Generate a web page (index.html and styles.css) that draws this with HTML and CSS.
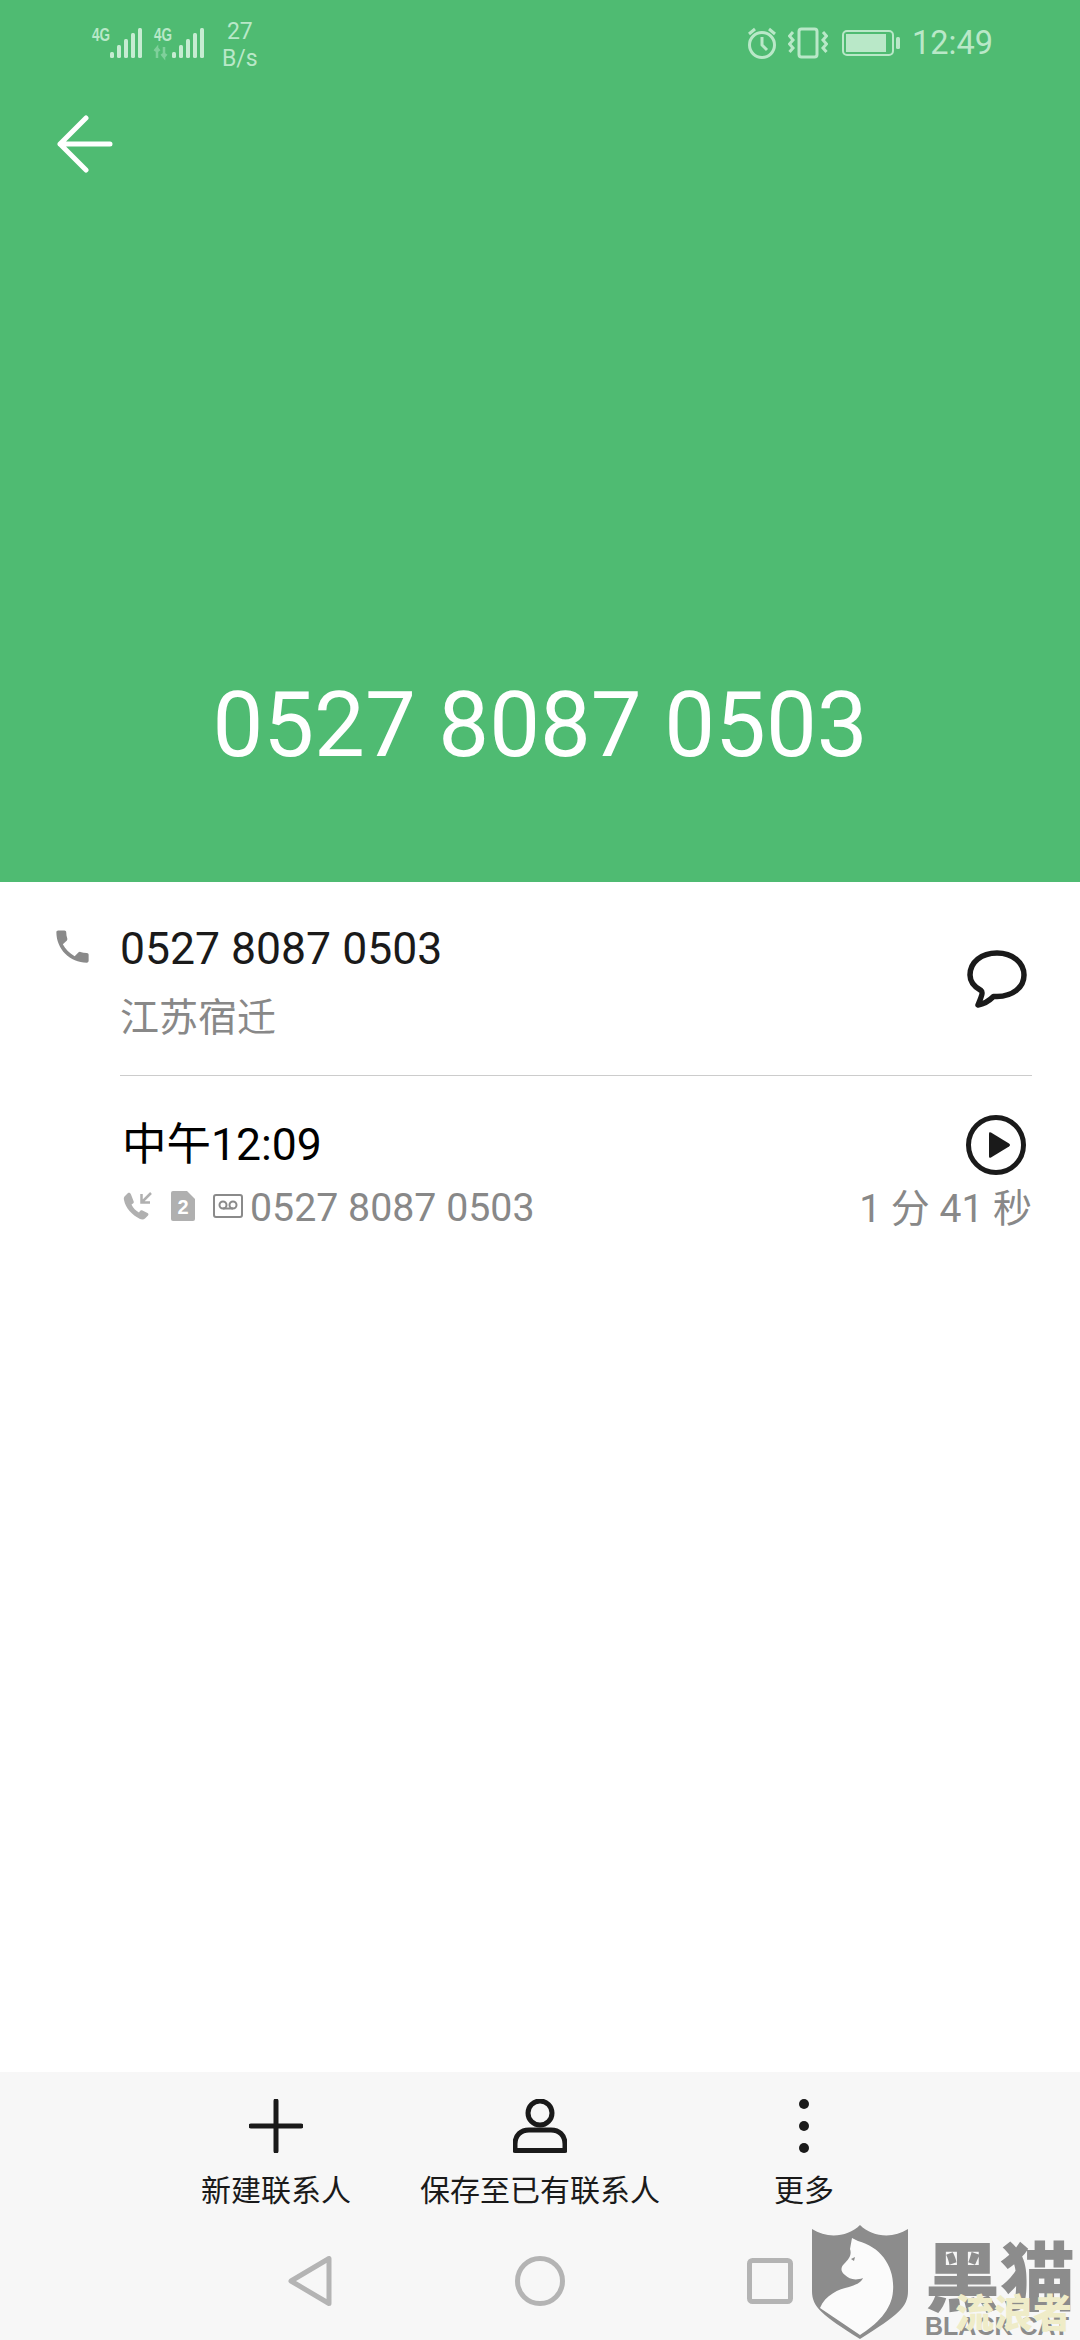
FILE: index.html
```html
<!DOCTYPE html>
<html lang="zh">
<head>
<meta charset="utf-8">
<title>通话详情</title>
<link rel="stylesheet" href="styles.css">
</head>
<body>
<div class="page">
  <header class="hero">
    <div class="status">
      <div class="status-left">
        <svg class="sig" width="52" height="32" viewBox="0 0 52 32"><text class="g4" x="0" y="14" textLength="18" lengthAdjust="spacingAndGlyphs">4G</text><g class="bars"><rect x="18" y="25" width="4" height="6" rx="1.5"/><rect x="25" y="18" width="4" height="13" rx="1.5"/><rect x="32" y="12" width="4" height="19" rx="1.5"/><rect x="39" y="6" width="4" height="25" rx="1.5"/><rect x="46" y="1" width="4" height="30" rx="1.5"/></g></svg>
        <svg class="sig" width="52" height="32" viewBox="0 0 52 32"><text class="g4" x="0" y="14" textLength="18" lengthAdjust="spacingAndGlyphs">4G</text><path class="updown" d="M3 31V21l-2.500 3M3 21l2.500 3M10 20v10l-2.500-3M10 30l2.500-3"/><g class="bars"><rect x="18" y="25" width="4" height="6" rx="1.5"/><rect x="25" y="18" width="4" height="13" rx="1.500"/><rect x="32" y="12" width="4" height="19" rx="1.5"/><rect x="39" y="6" width="4" height="25" rx="1.5"/><rect x="46" y="1" width="4" height="30" rx="1.5"/></g></svg>
        <div class="speed"><span>27</span><span>B/s</span></div>
      </div>
      <div class="status-right">
        <svg width="30" height="32" viewBox="0 0 30 32" class="st-ico"><circle cx="15" cy="18" r="12.500"/><path d="M15 10v8l5 5M2 7l6-5M28 7l-6-5"/></svg>
        <svg width="40" height="32" viewBox="0 0 40 32" class="st-ico"><rect x="11" y="2" width="18" height="28" rx="2.500"/><path d="M5 5L1.500 9 5 13 1.500 17 5 21 1.500 25M35 5l3.500 4-3.500 4 3.500 4-3.500 4 3.500 4"/></svg>
        <svg width="59" height="26" viewBox="0 0 59 26" class="batt"><rect class="batt-o" x="1" y="1" width="50" height="24" rx="4"/><rect class="batt-f" x="4" y="4" width="40" height="18"/><rect class="batt-f" x="54" y="7" width="4" height="12" rx="1.500"/></svg>
        <span class="time">12:49</span>
      </div>
    </div>
    <div class="backrow">
      <svg width="58" height="58" viewBox="0 0 58 58" class="back"><path d="M29 3L3 29l26 26M3 29h50"/></svg>
    </div>
    <div class="bignum">0527 8087 0503</div>
  </header>

  <main class="details">
    <section class="row first">
      <svg class="phone" width="43" height="43" viewBox="0 0 24 24"><path d="M6.600 10.800c1.400 2.800 3.800 5.100 6.600 6.600l2.200-2.200c.3-.3.700-.4 1-.2 1.100.4 2.300.6 3.600.6.600 0 1 .4 1 1V20c0 .6-.4 1-1 1C10.600 21 3 13.400 3 4c0-.6.400-1 1-1h3.500c.6 0 1 .4 1 1 0 1.300.2 2.500.6 3.600.1.300 0 .7-.2 1z"/></svg>
      <div class="row-main">
        <div class="primary">0527 8087 0503</div>
        <div class="secondary loc">江苏宿迁</div>
      </div>
      <svg class="msg" width="60" height="58" viewBox="0 0 60 58"><path d="M30 3C14.500 3 3 12 3 25c0 7 4.500 12 11 15.500 2 1.500 1 5-3 14.500 6-1 11-4 15.500-8.500 1 0 2.500 0 3.500 0 15.500 0 27-9 27-21.500S45.500 3 30 3z"/></svg>
    </section>
    <div class="divider"></div>
    <section class="row second">
      <div class="row-main">
        <div class="primary call-time">中午12:09</div>
        <div class="meta">
          <svg width="30" height="30" viewBox="0 0 30 30" class="m-call"><path class="fillp" d="M2 5c-1 1-1.500 2-1 4 1.500 8 8 15 16 19 2 .8 4 .5 5-.5l3-3c.8-1 .5-2-.5-2.500l-5-2.500c-1-.5-2-.3-2.500.5l-1 1.500c-3-1.500-6-4.500-7.500-8l1.500-1c1-.7 1-1.500.5-2.500L8 3.500C7.300 1.500 6 1.500 5 2z"/><path class="strokep" d="M28 2l-9 9M18.500 3v8.500H27"/></svg>
          <svg width="24" height="30" viewBox="0 0 24 30" class="m-sim"><path class="sim" d="M2 0h14l8 8v20a2 2 0 0 1-2 2H2a2 2 0 0 1-2-2V2a2 2 0 0 1 2-2z"/><text class="sim-t" x="12" y="23" text-anchor="middle">2</text></svg>
          <svg width="30" height="24" viewBox="0 0 30 24" class="m-vm"><rect x="1" y="1" width="28" height="22" rx="2"/><circle cx="10" cy="11" r="3.500"/><circle cx="20" cy="11" r="3.500"/><path d="M10 14.500h10"/></svg>
          <span class="secondary">0527 8087 0503</span>
        </div>
      </div>
      <div class="row-side">
        <svg width="60" height="60" viewBox="0 0 60 60" class="play"><circle cx="30" cy="30" r="27.500"/><path class="tri" d="M23 18.500v23q0 2 2 1l18-11q2-1.500 0-3l-18-11q-2-1-2 1z"/></svg>
        <div class="secondary dur">1 分 41 秒</div>
      </div>
    </section>
  </main>

  <footer class="bottom">
    <div class="actions">
      <div class="action">
        <svg width="54" height="54" viewBox="0 0 54 54" class="a-ico"><path d="M27 2v50M2 27h50"/></svg>
        <span>新建联系人</span>
      </div>
      <div class="action">
        <svg width="54" height="54" viewBox="0 0 54 54" class="a-ico"><circle cx="27" cy="14" r="12"/><path d="M2 51.500V45c0-9 6-14 14-14h22c8 0 14 5 14 14v6.500z"/></svg>
        <span>保存至已有联系人</span>
      </div>
      <div class="action">
        <svg width="54" height="54" viewBox="0 0 54 54" class="a-dots"><circle cx="27" cy="5" r="5"/><circle cx="27" cy="27" r="5"/><circle cx="27" cy="49" r="5"/></svg>
        <span>更多</span>
      </div>
    </div>
    <nav class="navbar">
      <svg width="44" height="50" viewBox="0 0 44 50" class="nav-ico"><path d="M3 25L41 2.500v45z"/></svg>
      <svg width="50" height="50" viewBox="0 0 50 50" class="nav-ico"><circle cx="25" cy="25" r="22.500"/></svg>
      <svg width="46" height="46" viewBox="0 0 46 46" class="nav-ico"><rect x="2.500" y="2.500" width="41" height="41" rx="3"/></svg>
    </nav>
    <div class="wm">
      <svg width="98" height="114" viewBox="0 0 98 114" class="wm-shield"><path d="M1 4c15 10 36 8 48-4 12 12 33 14 48 4v62c0 16-10 24-48 48C11 90 1 82 1 66z"/><path class="cat" d="M41 13l6 3C70 22 84 42 82 66 81 85 65 100 49 110L9 83C14 70 28 64 38 62 44 60 50 58 52 53 44 56 38 54 34 50 30 47 29 43 33 39 38 34 41 30 39 24z"/><path class="eye" d="M40 34l4-2-1 4z"/></svg>
      <div class="wm-text">
        <div class="wm-cn">黑猫</div>
        <div class="wm-en">BLACK CAT</div>
        <div class="wm-ll">流浪者</div>
      </div>
    </div>
  </footer>
</div>
</body>
</html>
```

FILE: styles.css
```css
* { box-sizing: border-box; }
html, body { margin: 0; padding: 0; }
body { width: 1080px; height: 2340px; overflow: hidden; background: #fff; font-family: Roboto, "Noto Sans CJK SC", sans-serif; }
.page { width: 1080px; height: 2340px; display: flex; flex-direction: column; position: relative; }

/* header */
.hero { height: 882px; background: #4fbb72; display: flex; flex-direction: column; }
.status { display: flex; justify-content: space-between; align-items: flex-start; padding: 21px 87px 0 92px; height: 106px; }
.status-left { display: flex; align-items: flex-start; gap: 10px; padding-top: 6px; }
.status-right { display: flex; align-items: center; gap: 11px; padding-top: 5px; }
.sig { display: block; overflow: visible; }
.g4 { font-family: "Liberation Sans Narrow", "Liberation Sans", sans-serif; font-weight: 700; font-size: 18px; fill: #b9e8c8; }
.bars { fill: #c6ecd2; }
.updown { fill: none; stroke: #7fd09b; stroke-width: 2.500; }
.speed { display: flex; flex-direction: column; align-items: center; margin: -9px 0 0 6px; color: #b9e8c8; font-size: 23px; line-height: 27px; }
.st-ico { fill: none; stroke: #b9e8c8; stroke-width: 3; display: block; }
.batt { display: block; margin-left: 3px; }
.batt-o { fill: none; stroke: #b9e8c8; stroke-width: 2; }
.batt-f { fill: #b9e8c8; }
.time { color: #b9e8c8; font-size: 32.500px; line-height: 34px; }
.backrow { padding: 9px 0 0 57px; }
.back { display: block; fill: none; stroke: #fff; stroke-width: 5; stroke-linecap: round; stroke-linejoin: round; }
.bignum { margin-top: auto; padding-bottom: 107px; text-align: center; color: #fff; font-size: 90.500px; line-height: 100px; }

/* details */
.details { flex: 1; }
.row { display: flex; padding: 0 48px 0 120px; position: relative; }
.row-main { flex: 1; }
.first { height: 193px; padding-top: 42px; }
.phone { position: absolute; left: 51px; top: 43px; fill: #8a8a8a; }
.primary { color: #1a1a1a; font-size: 44.500px; line-height: 50px; }
.secondary { color: #888; font-size: 39px; line-height: 46px; }
.loc { margin-top: 21px; }
.msg { fill: none; stroke: #1a1a1a; stroke-width: 5.500; stroke-linejoin: round; margin: 26px 5px 0 0; }
.divider { height: 1px; margin: 0 48px 0 120px; background: #cccccc; }
.second { padding-top: 44px; }
.call-time { color: #000; padding-left: 2px; }
.meta { display: flex; align-items: center; gap: 18px; margin-top: 15px; padding-left: 3px; }
.meta svg { margin-bottom: 5px; }
.meta .secondary { margin-left: -11px; font-size: 39.300px; }
.m-call .fillp { fill: #b0b0b0; }
.strokep { fill: none; stroke: #b0b0b0; stroke-width: 2.500; }
.sim { fill: #b0b0b0; }
.sim-t { fill: #fff; font-family: "Liberation Sans", sans-serif; font-weight: 700; font-size: 20px; }
.m-vm { fill: none; stroke: #8a8a8a; stroke-width: 2; }
.row-side { display: flex; flex-direction: column; align-items: flex-end; }
.play { fill: none; stroke: #1a1a1a; stroke-width: 5; margin-right: 6px; margin-top: -5px; }
.tri { fill: #1a1a1a; stroke: none; }
.dur { margin-top: 11px; white-space: nowrap; }

/* bottom */
.bottom { height: 268px; background: #f7f7f7; position: relative; }
.actions { display: grid; grid-template-columns: repeat(3, 264px); justify-content: center; padding-top: 27px; }
.action { display: flex; flex-direction: column; align-items: center; color: #1a1a1a; font-size: 30px; line-height: 40px; font-family: "Noto Sans CJK SC", sans-serif; }
.action span { margin-top: 15px; white-space: nowrap; }
.a-ico { fill: none; stroke: #1a1a1a; stroke-width: 5; stroke-linecap: round; stroke-linejoin: round; display: block; }
.a-dots { fill: #1a1a1a; display: block; }
.navbar { display: grid; grid-template-columns: repeat(3, 230px); justify-content: center; justify-items: center; align-items: center; margin-top: 48px; }
.nav-ico { fill: none; stroke: #b4b4b4; stroke-width: 5; stroke-linejoin: round; display: block; }

/* watermark */
.wm { position: absolute; left: 811px; top: 153px; display: flex; gap: 16px; }
.wm-shield { fill: #8c8c8c; display: block; }
.cat { fill: #fbfbfb; }
.eye { fill: #8c8c8c; }
.wm-text { position: relative; width: 155px; height: 104px; margin-top: 9px; color: #8c8c8c; }
.wm-cn { font-family: "Noto Sans CJK SC", sans-serif; font-weight: 900; font-size: 75px; line-height: 78px; white-space: nowrap; }
.wm-en { margin-top: 2px; font-family: "Liberation Sans", sans-serif; font-weight: 700; font-size: 25px; line-height: 24px; white-space: nowrap; }
.wm-ll { position: absolute; left: 30px; top: 54px; color: #efecc8; font-family: "Noto Sans CJK SC", sans-serif; font-weight: 900; font-size: 39px; line-height: 44px; white-space: nowrap; }
```
